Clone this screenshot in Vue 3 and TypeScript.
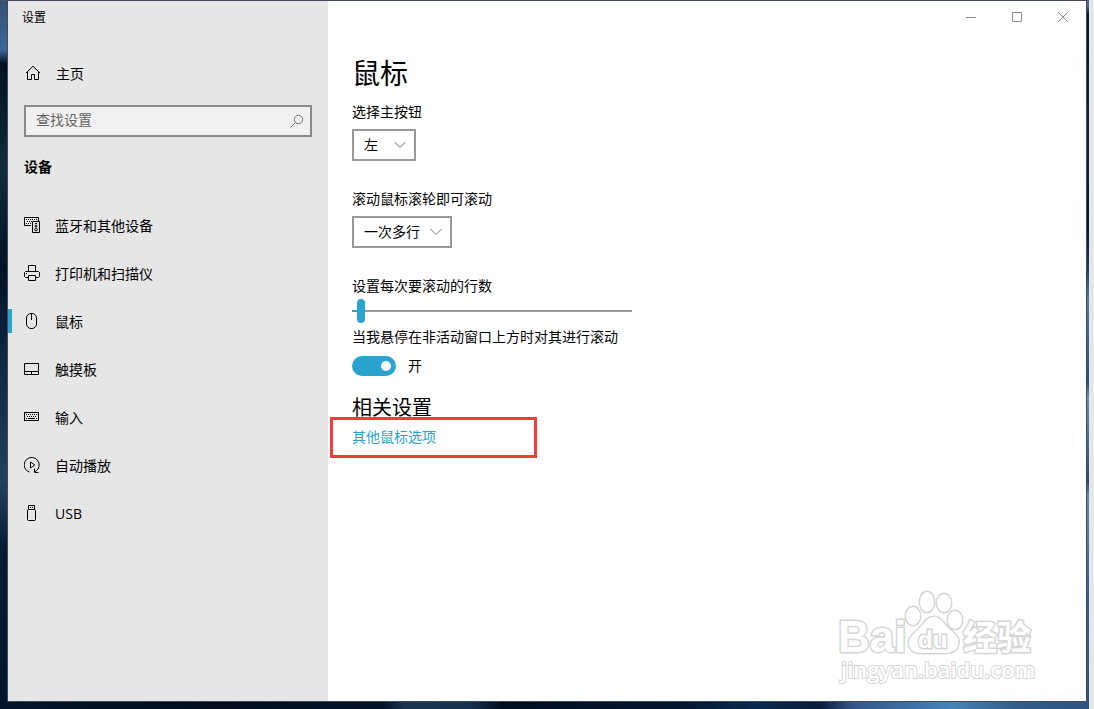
<script setup lang="ts">
import { computed, ref } from 'vue'

interface NavItem {
  id: string
  label: string
}

const navItems: NavItem[] = [
  { id: 'devices', label: '蓝牙和其他设备' },
  { id: 'printer', label: '打印机和扫描仪' },
  { id: 'mouse', label: '鼠标' },
  { id: 'touchpad', label: '触摸板' },
  { id: 'typing', label: '输入' },
  { id: 'autoplay', label: '自动播放' },
  { id: 'usb', label: 'USB' },
]

const activeId = ref('mouse')
const query = ref('')
const primaryButton = ref('左')
const scrollMode = ref('一次多行')
const lines = ref(3)
const hoverScroll = ref(true)

const fill = computed(() => `${((lines.value - 1) / 99) * 100}%`)
</script>

<template>
  <div class="desktop">
    <div class="window">
      <aside class="sidebar">
        <div class="caption">设置</div>
        <a class="home" href="#home">
          <svg class="icon" viewBox="0 0 16 16" aria-hidden="true">
            <path d="M1 8 L8 1.2 L15 8 M2.5 7 V14.5 H6.5 V9.5 H9.5 V14.5 H13.5 V7" />
          </svg>
          <span>主页</span>
        </a>
        <label class="search">
          <input v-model="query" type="text" placeholder="查找设置" aria-label="查找设置" />
          <svg class="search-icon" viewBox="0 0 16 16" aria-hidden="true">
            <circle cx="9.5" cy="6.5" r="4.2" />
            <path d="M6.4 9.6 L1.5 14.5" />
          </svg>
        </label>
        <h2 class="group">设备</h2>
        <nav class="nav">
          <a
            v-for="item in navItems"
            :key="item.id"
            :href="'#' + item.id"
            class="nav-item"
            :class="{ active: item.id === activeId }"
            @click.prevent="activeId = item.id"
          >
            <svg class="icon" viewBox="0 0 16 16" aria-hidden="true">
              <g v-if="item.id === 'devices'">
                <path d="M7 8.5 H0.5 V0.5 H14.5 V4" />
                <path d="M2 2.5 H14 M3 4.5 H8 M2 6.5 H7" stroke-dasharray="1 1" />
                <path d="M8.5 4.5 H15.5 V15.5 H8.5 Z M11 6.5 H13" />
                <circle cx="12" cy="9" r="1" />
                <circle cx="12" cy="12.5" r="1.4" />
              </g>
              <g v-else-if="item.id === 'printer'">
                <path d="M4.5 6 V0.5 H11.5 V6" />
                <path d="M4 12.5 H1.5 L0.5 11.5 V7.5 L1.5 6.5 H14.5 L15.5 7.5 V11.5 L14.5 12.5 H12" />
                <path d="M4.5 10.5 H11.5 V15.5 H4.5 Z M2 8.5 H3" />
              </g>
              <g v-else-if="item.id === 'mouse'">
                <rect x="2.5" y="0.5" width="10" height="15" rx="4.5" />
                <path d="M7.5 1 V7" />
              </g>
              <g v-else-if="item.id === 'touchpad'">
                <path d="M0.5 2.5 H14.5 V13.5 H0.5 Z M1 10.5 H14 M7.5 11 V13" />
              </g>
              <g v-else-if="item.id === 'typing'">
                <rect x="0.5" y="3.5" width="14" height="8" />
                <path d="M2 5.5 H14 M3 7.5 H13" stroke-dasharray="1 1" />
                <path d="M2 9.5 H3 M4 9.5 H11 M12 9.5 H13" />
              </g>
              <g v-else-if="item.id === 'autoplay'">
                <path d="M5.5 15.1 A7.5 7.5 0 1 1 14 12" />
                <path d="M14.5 11.5 L11 15 M10.5 11.5 V15.5 H14.5 M6.5 5 V11 L10.8 8 Z" />
              </g>
              <g v-else>
                <path d="M4.5 5 V0.5 H10.5 V5 M6 2.5 H7 M8 2.5 H9" />
                <rect x="3.5" y="4.5" width="8" height="11" rx="1" />
              </g>
            </svg>
            <span>{{ item.label }}</span>
          </a>
        </nav>
      </aside>

      <main class="content">
        <div class="window-controls">
          <button type="button" aria-label="最小化">
            <svg viewBox="0 0 10 10"><path d="M0 5.5 H10" /></svg>
          </button>
          <button type="button" aria-label="最大化">
            <svg viewBox="0 0 10 10"><path d="M0.5 0.5 H9.5 V9.5 H0.5 Z" /></svg>
          </button>
          <button type="button" aria-label="关闭">
            <svg viewBox="0 0 10 10"><path d="M0 0 L10 10 M10 0 L0 10" /></svg>
          </button>
        </div>

        <div class="page">
          <h1>鼠标</h1>

          <div class="field">
            <label for="primary">选择主按钮</label>
            <div class="select narrow">
              <select id="primary" v-model="primaryButton">
                <option>左</option>
                <option>右</option>
              </select>
              <svg viewBox="0 0 12 8" aria-hidden="true"><path d="M0.5 1 L6 6.5 L11.5 1" /></svg>
            </div>
          </div>

          <div class="field">
            <label for="scroll">滚动鼠标滚轮即可滚动</label>
            <div class="select wide">
              <select id="scroll" v-model="scrollMode">
                <option>一次多行</option>
                <option>一次一个屏幕</option>
              </select>
              <svg viewBox="0 0 12 8" aria-hidden="true"><path d="M0.5 1 L6 6.5 L11.5 1" /></svg>
            </div>
          </div>

          <label for="lines">设置每次要滚动的行数</label>
          <input
            id="lines"
            v-model.number="lines"
            class="slider"
            type="range"
            min="1"
            max="100"
            :style="{ '--fill': fill }"
          />

          <label for="hover">当我悬停在非活动窗口上方时对其进行滚动</label>
          <div class="toggle-row">
            <input id="hover" v-model="hoverScroll" class="toggle" type="checkbox" role="switch" />
            <span>{{ hoverScroll ? '开' : '关' }}</span>
          </div>

          <h2>相关设置</h2>
          <a class="related" href="#mouse-options">其他鼠标选项</a>
        </div>

        <svg class="watermark" viewBox="0 0 204 104" role="img" aria-label="Baidu 经验">
          <text class="mark" x="2" y="64" font-size="44">Bai</text>
          <g class="paw">
            <ellipse cx="77" cy="28" rx="7" ry="9" />
            <ellipse cx="91" cy="14" rx="7" ry="10" />
            <ellipse cx="108" cy="15" rx="7" ry="9" />
            <ellipse cx="119" cy="32" rx="7" ry="9" />
            <path d="M97 29 C104 28 108 36 113 41 C120 47 124 50 122 57 C120 66 111 65 97 65 C84 65 75 66 73 57 C72 50 77 46 83 41 C88 36 91 29 97 29 Z" />
          </g>
          <text class="mark" x="82" y="60" font-size="24">du</text>
          <text class="mark" x="127" y="62" font-size="34">经验</text>
          <text class="url" x="5" y="90" font-size="22">jingyan.baidu.com</text>
        </svg>
      </main>
    </div>
  </div>
</template>

<style>
body {
  margin: 0;
}
</style>

<style scoped>
*,
*::before,
*::after {
  box-sizing: border-box;
}

.desktop {
  display: flex;
  min-height: 100vh;
  padding: 1px 8px 8px;
  font: 14px/20px "Open Sans", "Noto Sans CJK SC", sans-serif;
  color: #000;
  background:
    linear-gradient(#e6e6e6, #e6e6e6) right / 5px 100% no-repeat,
    linear-gradient(#4e5666, #4e5666) top / 100% 1px no-repeat,
    linear-gradient(#56759a, #4d6078 1%, #0b1722 2%, #12283a 20%, #071525 32%, #1d3f66 38%, #4b7ea6 42%, #1c567f 54%, #6a93b5 56%, #2c4a72 68%, #5f8cb4 70%, #30609a 84%, #2d5480) right / 8px 100% no-repeat,
    linear-gradient(90deg, #04142a, #020c1d 20%, #041229 35%, #1b3450 37%, #14304c 43%, #020c20 46%, #04152f 62%, #0a2a50 69%, #0a1c3a 75%, #34558a 78%, #4384b8 87%, #335c88 93%, #2e5480) bottom / 100% 8px no-repeat,
    linear-gradient(#35516f, #3b679a 7%, #04101f 9%, #102c3b 24%, #041126 38%, #0d2642 50%, #22405f 68%, #061a31 78%, #04152b);
}

.window {
  display: flex;
  flex: 1;
  background: #fff;
  box-shadow: 0 0 0 1px #414b59;
}

.sidebar {
  flex: none;
  width: 320px;
  background: #e6e6e6;
}

.caption {
  height: 34px;
  padding-left: 14px;
  font-size: 12px;
  line-height: 34px;
}

a {
  color: inherit;
  text-decoration: none;
}

.icon {
  flex: none;
  width: 16px;
  height: 16px;
  margin-bottom: 2px;
  fill: none;
  stroke: #000;
}

.home {
  display: flex;
  align-items: center;
  gap: 15px;
  height: 48px;
  margin-top: 15px;
  padding-left: 17px;
}

.search {
  display: flex;
  align-items: center;
  height: 32px;
  margin: 7px 16px 0;
  padding: 0 5px 0 10px;
  border: 2px solid #8a8a8a;
  background: #f0f0f0;
}

.search input {
  flex: 1;
  min-width: 0;
  padding: 0 0 2px;
  border: 0;
  outline: 0;
  background: none;
  font: inherit;
}

.search input::placeholder {
  color: #666;
  opacity: 1;
}

.search-icon {
  width: 16px;
  height: 16px;
  fill: none;
  stroke: #777;
}

.nav-item {
  display: flex;
  align-items: center;
  gap: 15px;
  height: 48px;
  padding-left: 16px;
  background: linear-gradient(#2aa3cf, #2aa3cf) 0 11px / 0 24px no-repeat;
}

.nav-item.active {
  background-size: 4px 24px;
}

.content {
  position: relative;
  flex: 1;
  min-width: 0;
}

.window-controls {
  display: flex;
  justify-content: flex-end;
}

.window-controls button {
  display: grid;
  place-items: center;
  width: 46px;
  height: 32px;
  padding: 0;
  border: 0;
  background: none;
}

.window-controls svg {
  width: 10px;
  height: 10px;
  fill: none;
  stroke: #8c8c8c;
}

.page {
  display: flex;
  flex-direction: column;
  align-items: flex-start;
  padding: 22px 24px;
}

h1 {
  margin: 0 0 11px;
  font-size: 28px;
  font-weight: 400;
  line-height: 36px;
}

.field {
  margin-bottom: 28px;
}

.field label {
  display: block;
  margin-bottom: 7px;
}

.select {
  position: relative;
  height: 32px;
}

.narrow {
  width: 64px;
}

.wide {
  width: 100px;
}

.select select {
  width: 100%;
  height: 100%;
  padding: 0 24px 0 10px;
  border: 2px solid #999;
  border-radius: 0;
  appearance: none;
  background: #fff;
  color: #000;
  font: inherit;
}

.select svg {
  position: absolute;
  top: 12px;
  right: 10px;
  width: 12px;
  height: 8px;
  fill: none;
  stroke: #777;
  pointer-events: none;
}

.slider {
  width: 280px;
  height: 24px;
  margin: 3px 0 4px;
  appearance: none;
  background: linear-gradient(90deg, #2aa3cf var(--fill), #999 var(--fill)) 0 50% / 100% 2px no-repeat;
}

.slider::-webkit-slider-thumb {
  width: 8px;
  height: 24px;
  border-radius: 4px;
  appearance: none;
  background: #2aa3cf;
}

.toggle-row {
  display: flex;
  align-items: center;
  gap: 12px;
  height: 20px;
  margin-top: 9px;
}

.toggle {
  display: flex;
  align-items: center;
  width: 44px;
  height: 20px;
  margin: 0;
  padding: 0 5px;
  border-radius: 10px;
  appearance: none;
  background: #999;
}

.toggle::before {
  width: 10px;
  height: 10px;
  border-radius: 50%;
  background: #fff;
  content: "";
}

.toggle:checked {
  justify-content: flex-end;
  background: #2aa3cf;
}

h2 {
  margin: 18px 0 5px;
  font-size: 20px;
  font-weight: 400;
  line-height: 28px;
}

.group {
  margin: 20px 16px 25px;
  font-size: 14px;
  font-weight: 700;
  line-height: 20px;
}

.related {
  position: relative;
  color: #2aa3cf;
}

.related::after {
  position: absolute;
  top: -10px;
  left: -22px;
  width: 207px;
  height: 41px;
  border: 3px solid #f93a3c;
  content: "";
}

.watermark {
  position: absolute;
  right: 46px;
  bottom: 9px;
  width: 204px;
  height: 104px;
  fill: #fff;
  stroke: #d6d6d6;
  stroke-width: 2px;
  paint-order: stroke;
  pointer-events: none;
}

.paw {
  stroke-width: 3px;
}

.mark {
  font-family: "Liberation Sans", "Noto Sans CJK SC", sans-serif;
  font-weight: 700;
  stroke-width: 3px;
}

.url {
  font-family: "Open Sans", sans-serif;
  font-weight: 600;
}
</style>
